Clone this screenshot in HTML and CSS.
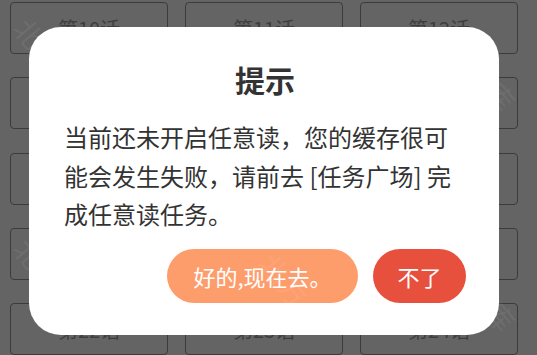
FILE: index.html
```html
<!DOCTYPE html>
<html lang="zh">
<head>
<meta charset="utf-8">
<link rel="stylesheet" href="styles.css">
</head>
<body>
<div class="grid">
  <div class="cell">第10话</div><div class="cell">第11话</div><div class="cell">第12话</div>
  <div class="cell">第13话</div><div class="cell">第14话</div><div class="cell">第15话</div>
  <div class="cell">第16话</div><div class="cell">第17话</div><div class="cell">第18话</div>
  <div class="cell">第19话</div><div class="cell">第20话</div><div class="cell">第21话</div>
  <div class="cell">第22话</div><div class="cell">第23话</div><div class="cell">第24话</div>
</div>
<div class="dialog">
  <h1 class="title">提示</h1>
  <p class="msg">当前还未开启任意读，您的缓存很可能会发生失败，请前去 [任务广场] 完成任意读任务。</p>
  <div class="actions">
    <button class="btn btn-ok">好的,现在去。</button>
    <button class="btn btn-no">不了</button>
  </div>
</div>
<div class="wm wm1">北方</div>
<div class="wm wm2">书库</div>
<div class="wm wm3">北方</div>
<div class="wm wm4">书库</div>
<div class="wm wm5">北方</div>
</body>
</html>
```
FILE: styles.css
```css
html, body {
  margin: 0;
  padding: 0;
}
body {
  width: 537px;
  height: 355px;
  overflow: hidden;
  background: #646464;
  font-family: "Noto Sans CJK SC", "Noto Sans", sans-serif;
  position: relative;
}
.grid {
  display: grid;
  grid-template-columns: repeat(3, 158px);
  grid-auto-rows: 52px;
  column-gap: 17px;
  row-gap: 23.3px;
  padding: 2px 20px 0 10px;
}
.cell {
  box-sizing: border-box;
  border: 1.5px solid #3b3b3b;
  border-radius: 4px;
  display: flex;
  align-items: center;
  justify-content: center;
  font-size: 20px;
  color: #3e3e3e;
}
.dialog {
  position: absolute;
  left: 29px;
  top: 27px;
  width: 470px;
  height: 308px;
  box-sizing: border-box;
  background: #fff;
  border-radius: 32px;
  padding: 32px 33px 32px 35px;
  display: flex;
  flex-direction: column;
}
.title {
  margin: 0;
  font-size: 30px;
  line-height: 40px;
  font-weight: 700;
  color: #333;
  text-align: center;
}
.msg {
  margin: 19px 0 0;
  font-size: 24px;
  line-height: 38.5px;
  color: #333;
  width: 402px;
}
.actions {
  margin-top: auto;
  display: flex;
  justify-content: flex-end;
  gap: 15px;
}
.btn {
  border: none;
  height: 54px;
  border-radius: 27px;
  color: #fff;
  font-family: inherit;
  font-size: 22px;
  padding: 0;
}
.btn-ok {
  width: 191px;
  background: #fe9d6c;
}
.btn-no {
  width: 93px;
  background: #e8503e;
}
.wm {
  position: absolute;
  font-size: 28px;
  line-height: 30px;
  color: rgba(255, 255, 255, 0.08);
  transform: rotate(50deg);
  pointer-events: none;
  letter-spacing: 2px;
}
.wm1 { left: 10px; top: 30px; }
.wm2 { left: 462px; top: 70px; }
.wm3 { left: 10px; top: 250px; }
.wm4 { left: 462px; top: 290px; }
.wm5 { left: 255px; top: 265px; }
```
